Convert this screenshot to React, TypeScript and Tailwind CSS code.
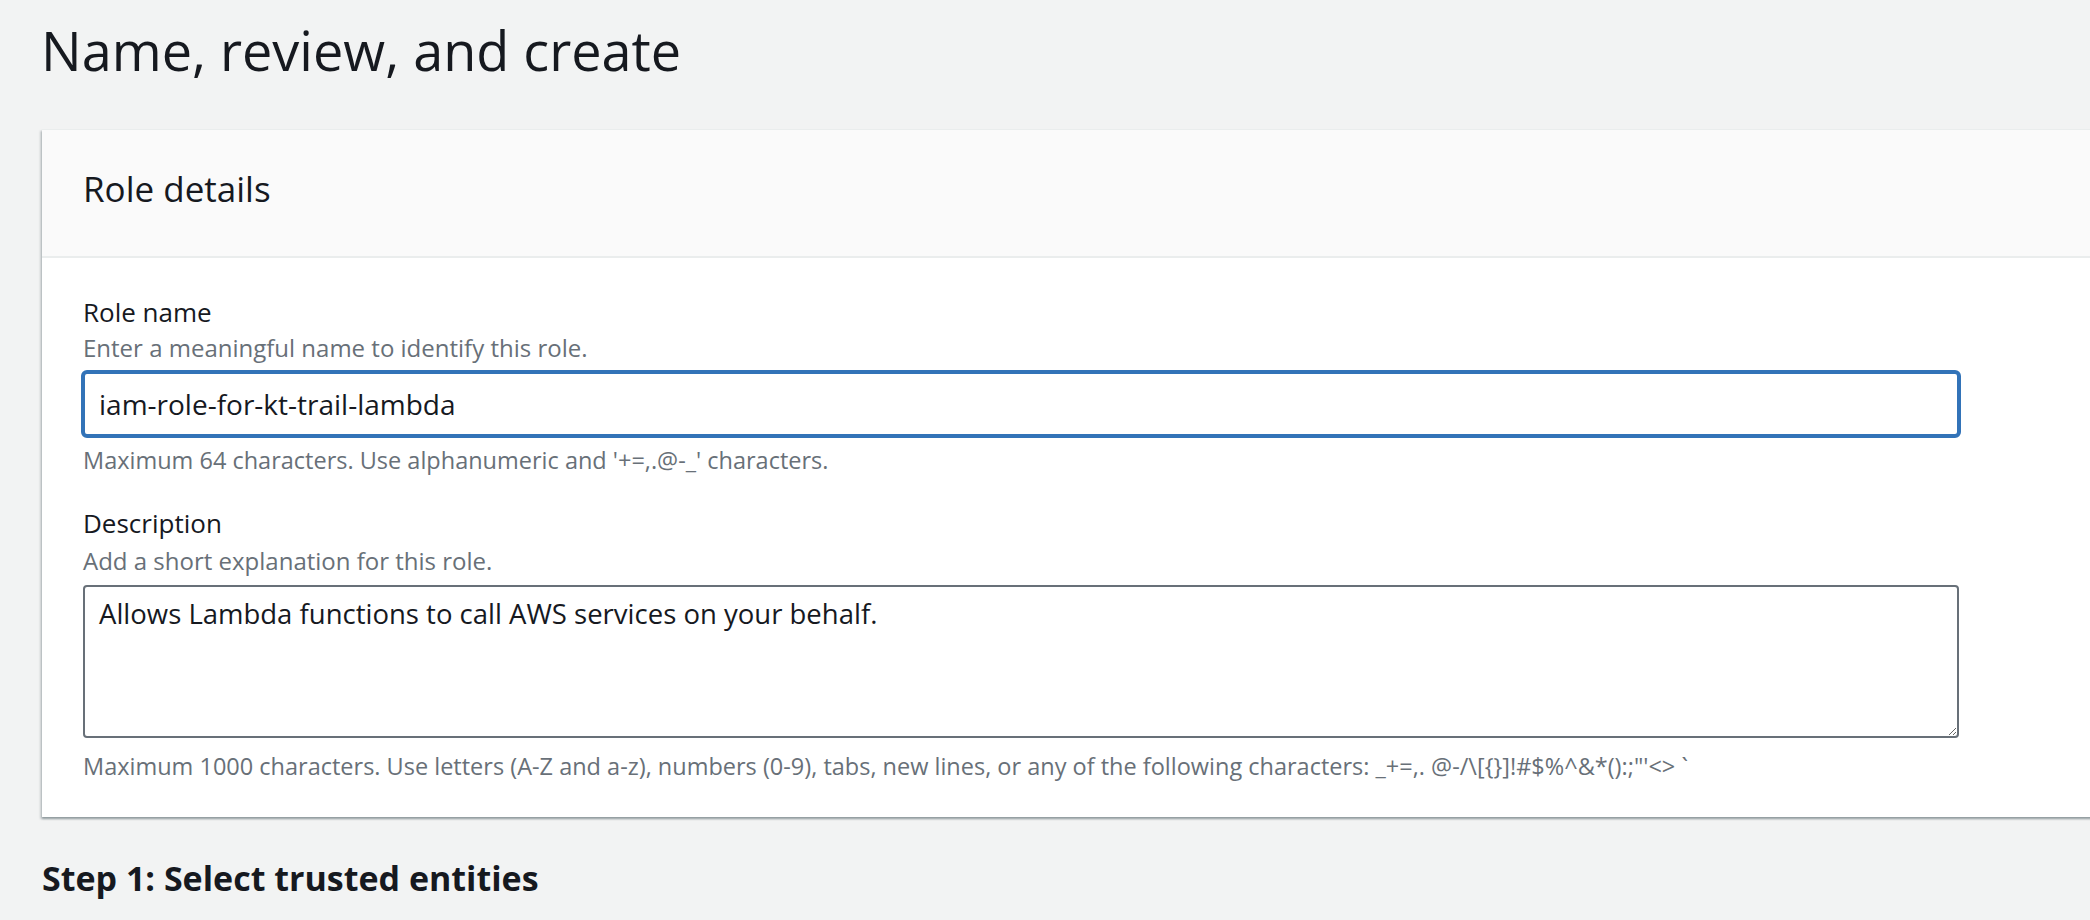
import React from 'react';

const sans = "font-['Open_Sans','Noto_Sans',sans-serif]";

export default function App() {
  return (
    <div className={`min-h-[920px] w-full overflow-hidden bg-[#f2f3f3] text-[#16191f] ${sans}`}>
      <h1 className="pl-[41px] pt-[22px] text-[54px] leading-[56px] font-normal">
        Name, review, and create
      </h1>

      <div className="mt-[51px] ml-[42px] mr-[-12px] bg-white shadow-[0_2px_2px_0_rgba(0,28,36,0.3),-2px_2px_2px_0_rgba(0,28,36,0.15)] border-t border-[#eaeded]">
        <div className="border-b-2 border-[#eaeded] bg-[#fafafa] pl-[41px] pt-[41px] pb-[49px]">
          <h2 className="text-[35px] leading-[36px] font-normal">Role details</h2>
        </div>

        <div className="pl-[41px] pt-[38px] pb-[37px]">
          <div className="w-[1876px]">
            <label className="block text-[26px] leading-[32px]">Role name</label>
            <p className="mt-[6px] text-[24px] leading-[28px] text-[#687078]">
              Enter a meaningful name to identify this role.
            </p>
            <input
              readOnly
              value="iam-role-for-kt-trail-lambda"
              className={`mt-[8px] -ml-[2px] block h-[68px] w-[1880px] rounded-[6px] border-4 border-[#3273b8] bg-white pl-[14px] text-[28px] leading-[36px] text-[#16191f] outline-none ${sans}`}
            />
            <p className="mt-[8px] text-[23.5px] leading-[28px] text-[#687078]">
              Maximum 64 characters. Use alphanumeric and '+=,.@-_' characters.
            </p>

            <label className="mt-[33px] block text-[26px] leading-[32px]">Description</label>
            <p className="mt-[8px] text-[24px] leading-[28px] text-[#687078]">
              Add a short explanation for this role.
            </p>
            <textarea
              readOnly
              defaultValue="Allows Lambda functions to call AWS services on your behalf."
              className={`mt-[10px] block h-[153px] w-[1876px] rounded-[4px] border-2 border-[#687078] bg-white px-[14px] pt-[9px] text-[27.5px] leading-[36px] text-[#16191f] outline-none ${sans}`}
            />
            <p className="mt-[14px] text-[23.5px] leading-[28px] text-[#687078]">
              Maximum 1000 characters. Use letters (A-Z and a-z), numbers (0-9), tabs, new lines, or any of the following characters: _+=,. @-/\[{'{'}{'}'}]!#$%^&amp;*():;"'&lt;&gt; `
            </p>
          </div>
        </div>
      </div>

      <h2 className="mt-[39px] pl-[42px] text-[34px] leading-[44px] font-bold">
        Step 1: Select trusted entities
      </h2>
    </div>
  );
}
